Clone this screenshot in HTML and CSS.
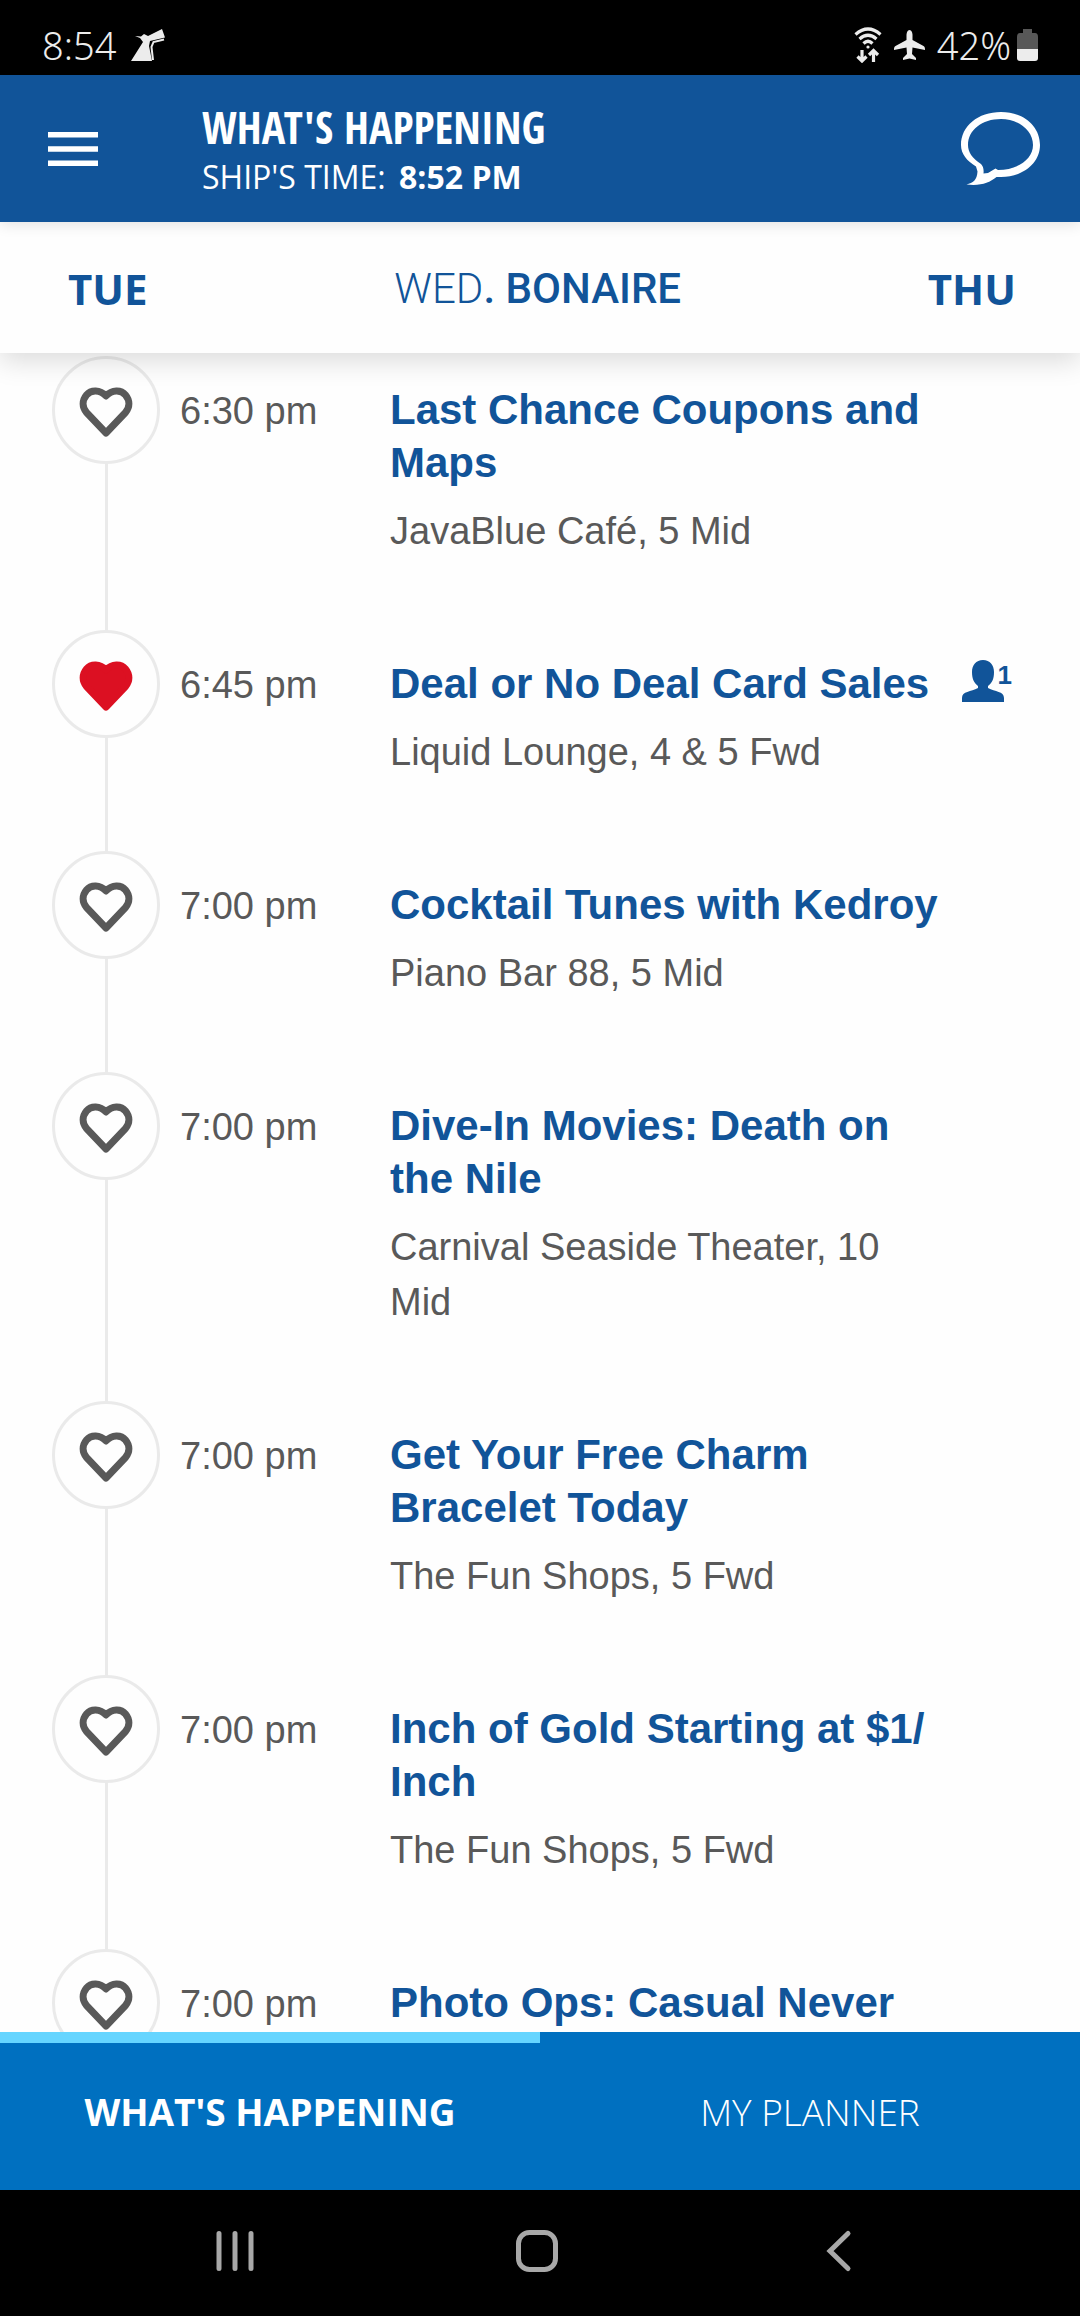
FILE: index.html
```html
<!DOCTYPE html>
<html lang="en">
<head>
<meta charset="utf-8">
<meta name="viewport" content="width=device-width, initial-scale=1">
<title>What's Happening</title>
<link rel="stylesheet" href="styles.css">
</head>
<body>
<svg class="symbols" aria-hidden="true">
  <symbol id="heart" viewBox="0 0 54 54">
    <path d="M27 13 C21 6.500 12 6.500 7.500 12 C3 17.500 3 24 7.500 29.500 L27 50 L46.500 29.500 C51 24 51 17.500 46.500 12 C42 6.500 33 6.500 27 13 Z" stroke-width="7" stroke-linejoin="round"/>
  </symbol>
</svg>
<div class="screen">
  <div class="status">
    <span>8:54</span>
    <svg class="status-ship" width="34" height="32" viewBox="0 0 34 32" aria-hidden="true"><path fill="#ececec" d="M0 32 L12 13 L9 9 L4 7 L10 7.500 L13 5 L17 7 L31 0 L34 8.500 L19 12 L18 17 L21 32 Z"/><path fill="none" stroke="#ececec" stroke-width="2" d="M33 10.500 L22.500 13 L20.500 18 L22 31"/></svg>
    <div class="status-right">
      <svg width="28" height="36" viewBox="0 0 28 36" aria-hidden="true"><g fill="none" stroke="#ececec" stroke-width="3.200"><path d="M1.500 7.500 Q14 -3.500 26.500 7.500"/><path d="M5.500 12 Q14 4.500 22.500 12"/><path d="M9.500 16.500 Q14 12 18.500 16.500"/><path d="M8 23 V33 M3.500 29.500 L8 34 L12.500 29.500 M19.500 35 V24 M15 28 L19.500 23.500 L24 28"/></g><circle cx="14" cy="20" r="1.600" fill="#ececec"/></svg>
      <svg width="31" height="30" viewBox="0 0 31 30" aria-hidden="true"><path fill="#ececec" d="M15.500 0 C17.500 0 18.500 3 18.500 5 V10 L29.500 16 C31 17 31 18 31 20 L18.500 17.500 L18 24 L22 28 V30 L15.500 28.500 L9 30 V28 L13 24 L12.500 17.500 L0 20 C0 18 0 17 1.500 16 L12.500 10 V5 C12.500 3 13.500 0 15.500 0 Z"/></svg>
      <span>42%</span>
      <svg class="status-battery" width="21" height="32" viewBox="0 0 21 32" aria-hidden="true"><path fill="#585858" d="M6 0 H15 V4 H18 Q21 4 21 8 V21 H0 V8 Q0 4 3 4 H6 Z"/><path fill="#ececec" d="M0 20 H21 V29 Q21 32 18 32 H3 Q0 32 0 29 Z"/></svg>
    </div>
  </div>

  <header class="header">
    <button class="icon-button" aria-label="Menu"><svg width="50" height="34" viewBox="0 0 50 34"><path fill="#fff" d="M0 0h50v5.500H0zM0 14.200h50v5.500H0zM0 28.500h50V34H0z"/></svg></button>
    <div class="heading">
      <h1>WHAT'S HAPPENING</h1>
      <p>SHIP'S TIME: <strong>8:52 PM</strong></p>
    </div>
    <button class="icon-button" aria-label="Chat"><svg width="79" height="74" viewBox="0 0 79 74"><path fill="#fff" fill-rule="evenodd" d="M40 0 C62 0 79 14 79 33 C79 51 62 65 40 65 L35.500 65 C28 71 20 74 5.500 72.500 C12 71 16 68 16.500 59.500 L15 54.500 C6 49 0 42 0 33 C0 14 17 0 40 0 Z M40 7 C21 7 7 18 7 33 C7 40 11 46 20 52 C22 54 23 57 22.500 61.500 L27 61 L34.500 56.500 L37 58 C57 58 72 47 72 33 C72 18 57 7 40 7 Z"/></svg></button>
  </header>

  <nav class="days" aria-label="Day">
    <a class="day" href="#tue">TUE</a>
    <h2><span>WED</span>. BONAIRE</h2>
    <a class="day" href="#thu">THU</a>
  </nav>

  <main class="agenda">
    <ul class="events">
      <li class="event">
        <div class="rail"><button class="favorite" aria-label="Add to planner"><svg><use href="#heart"/></svg></button></div>
        <time>6:30 pm</time>
        <div class="details"><h3>Last Chance Coupons and Maps</h3><p>JavaBlue Café, 5 Mid</p></div>
      </li>
      <li class="event">
        <div class="rail"><button class="favorite selected" aria-label="Remove from planner"><svg><use href="#heart"/></svg></button></div>
        <time>6:45 pm</time>
        <div class="details"><h3>Deal or No Deal Card Sales</h3><p>Liquid Lounge, 4 &amp; 5 Fwd</p></div>
        <div class="guests"><svg width="42" height="42" viewBox="0 0 42 42" aria-hidden="true"><path fill="#115499" d="M21 0 C28 0 32 5 32 12 C32 19 30 23 26 26 V28 C33 32 42 31 42 38 V42 H0 V38 C0 31 9 32 16 28 V26 C12 23 10 19 10 12 C10 5 14 0 21 0 Z"/></svg><span>1</span></div>
      </li>
      <li class="event">
        <div class="rail"><button class="favorite" aria-label="Add to planner"><svg><use href="#heart"/></svg></button></div>
        <time>7:00 pm</time>
        <div class="details"><h3>Cocktail Tunes with Kedroy</h3><p>Piano Bar 88, 5 Mid</p></div>
      </li>
      <li class="event">
        <div class="rail"><button class="favorite" aria-label="Add to planner"><svg><use href="#heart"/></svg></button></div>
        <time>7:00 pm</time>
        <div class="details"><h3>Dive-In Movies: Death on the Nile</h3><p>Carnival Seaside Theater, 10 Mid</p></div>
      </li>
      <li class="event">
        <div class="rail"><button class="favorite" aria-label="Add to planner"><svg><use href="#heart"/></svg></button></div>
        <time>7:00 pm</time>
        <div class="details"><h3>Get Your Free Charm Bracelet Today</h3><p>The Fun Shops, 5 Fwd</p></div>
      </li>
      <li class="event">
        <div class="rail"><button class="favorite" aria-label="Add to planner"><svg><use href="#heart"/></svg></button></div>
        <time>7:00 pm</time>
        <div class="details"><h3>Inch of Gold Starting at $1/<wbr>Inch</h3><p>The Fun Shops, 5 Fwd</p></div>
      </li>
      <li class="event">
        <div class="rail"><button class="favorite" aria-label="Add to planner"><svg><use href="#heart"/></svg></button></div>
        <time>7:00 pm</time>
        <div class="details"><h3>Photo Ops: Casual Never</h3></div>
      </li>
    </ul>
  </main>

  <nav class="tabs" aria-label="Sections">
    <a class="tab active" href="#happening" aria-current="page">WHAT'S HAPPENING</a>
    <a class="tab" href="#planner">MY PLANNER</a>
  </nav>

  <div class="system">
    <button class="icon-button" aria-label="Recent apps"><svg width="44" height="44" viewBox="0 0 44 44"><path stroke="#a8a8a8" stroke-width="5" stroke-linecap="round" d="M6 4.500 V39.500 M22 4.500 V39.500 M38 4.500 V39.500"/></svg></button>
    <button class="icon-button" aria-label="Home"><svg width="44" height="44" viewBox="0 0 44 44"><rect x="3.500" y="3.500" width="37" height="37" rx="11" fill="none" stroke="#a8a8a8" stroke-width="5"/></svg></button>
    <button class="icon-button" aria-label="Back"><svg width="44" height="44" viewBox="0 0 44 44"><path fill="none" stroke="#a8a8a8" stroke-width="5" stroke-linecap="round" d="M31 4.500 L13 22 L31 39.500"/></svg></button>
  </div>
</div>
</body>
</html>
```
FILE: styles.css
```css
* {
  box-sizing: border-box;
  margin: 0;
  padding: 0;
}

body {
  background: #fefefe;
  color: #595959;
  font-family: "Liberation Sans", sans-serif;
}

a {
  color: inherit;
  text-decoration: none;
}

button {
  border: 0;
  background: none;
}

svg {
  display: block;
}

.symbols {
  display: none;
}

.screen {
  display: flex;
  flex-direction: column;
  height: 100vh;
}

.status {
  display: flex;
  align-items: center;
  gap: 15px;
  padding: 18px 42px 3px;
  background: #000;
  color: #ececec;
  font: 300 38px/54px "Noto Sans", sans-serif;
}

.status-right {
  display: flex;
  align-items: center;
  gap: 12px;
  margin-left: auto;
}

.status-battery {
  margin-left: -6px;
}

.header {
  position: relative;
  z-index: 2;
  display: flex;
  align-items: center;
  padding: 24px 40px 24px 48px;
  background: #115499;
  box-shadow: 0 2px 14px rgba(0, 0, 0, 0.12);
  color: #fff;
}

.heading {
  flex: 1;
  padding-left: 104px;
}

.heading h1 {
  font: 700 44px/56px "Open Sans Condensed", "Roboto Condensed", sans-serif;
}

.heading p {
  font: 400 32px/43px "Open Sans", sans-serif;
}

.heading strong {
  margin-left: 5px;
}

.days {
  position: relative;
  z-index: 1;
  display: flex;
  align-items: center;
  justify-content: space-between;
  padding: 37px 64px 34px 68px;
  background: #fefefe;
  box-shadow: 0 8px 26px rgba(0, 0, 0, 0.14);
  color: #115499;
}

.day {
  font: 700 42px/60px "Open Sans", sans-serif;
}

.days h2 {
  font: 500 42px/60px Roboto, sans-serif;
}

.days h2 span {
  font-weight: 300;
}

.agenda {
  flex: 1;
  min-height: 0;
  overflow: hidden;
  padding-top: 3px;
}

.events {
  list-style: none;
}

.event {
  display: grid;
  grid-template-columns: 128px 210px 1fr 72px;
  padding: 0 68px 0 52px;
}

.rail {
  width: 108px;
  background: linear-gradient(#eaeaea, #eaeaea) center / 3px 100% no-repeat;
}

.favorite {
  display: flex;
  align-items: center;
  justify-content: center;
  width: 108px;
  height: 108px;
  border: 3px solid #eaeaea;
  border-radius: 50%;
  background: #fefefe;
}

.favorite svg {
  width: 54px;
  height: 54px;
  fill: none;
  stroke: #595959;
}

.favorite.selected svg {
  fill: #dc1022;
  stroke: #dc1022;
}

.event time {
  padding-top: 29px;
  font-size: 38px;
  line-height: 53px;
}

.details {
  padding: 27px 0 71px;
}

.details h3 {
  color: #115499;
  font-size: 42px;
  line-height: 53px;
}

.details p {
  margin-top: 15px;
  font-size: 38px;
  line-height: 55px;
}

.guests {
  display: flex;
  align-items: flex-start;
  justify-content: flex-end;
  padding-top: 30px;
  color: #115499;
}

.guests svg {
  flex: none;
}

.guests span {
  margin-left: -6px;
  font: 700 26px/30px "Liberation Sans", sans-serif;
}

.tabs {
  display: grid;
  grid-template-columns: 1fr 1fr;
  background: #0070c0;
  color: #fff;
}

.tab {
  padding: 43px 0 53px;
  border-top: 11px solid transparent;
  font: 300 37px/51px "Open Sans", sans-serif;
  text-align: center;
}

.tab.active {
  border-top-color: #66d5ff;
  font-weight: 700;
}

.system {
  display: flex;
  justify-content: center;
  gap: 258px;
  padding: 39px 6px 43px 0;
  background: #000;
}
```
